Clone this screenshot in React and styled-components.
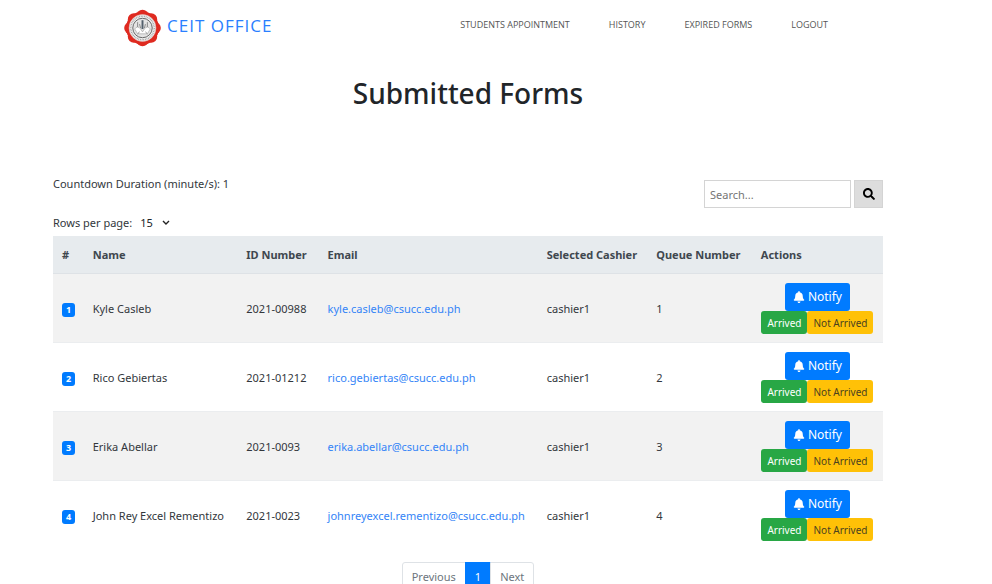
import React from "react";
import styled, { createGlobalStyle, css } from "styled-components";
import { FaBell, FaSearch } from "react-icons/fa";

const GlobalStyle = createGlobalStyle`
  *, *::before, *::after { box-sizing: border-box; }
  body {
    margin: 0;
    background: #fff;
    color: #32373c;
    font-family: "Noto Sans", "Open Sans", sans-serif;
    font-size: 11px;
    line-height: 18px;
  }
  button, input, select { font: inherit; }
`;

const Page = styled.div`
  padding-right: 56px;
`;

const Header = styled.header`
  display: flex;
  align-items: flex-start;
  justify-content: space-between;
  padding: 9px 108px 0 124px;
`;

const Brand = styled.a`
  display: flex;
  align-items: flex-start;
  gap: 6px;
  color: #2a7fff;
  font-family: "Open Sans", sans-serif;
  font-size: 17px;
  line-height: 34px;
  letter-spacing: 1px;
  text-decoration: none;
`;

const Seal = styled.svg`
  display: block;
  width: 37px;
  height: 38px;
`;

const Nav = styled.nav`
  display: flex;
  gap: 39px;
  padding-top: 8px;
`;

const NavLink = styled.a`
  color: #555;
  font-family: "Open Sans", sans-serif;
  font-size: 9px;
  line-height: 16px;
  text-decoration: none;
  text-transform: uppercase;
`;

const Main = styled.main`
  padding: 0 53px;
`;

const Title = styled.h1`
  margin: 28px 0 0;
  color: #212529;
  font-size: 28px;
  font-weight: 500;
  line-height: 36px;
  text-align: center;
`;

const Controls = styled.div`
  display: flex;
  justify-content: space-between;
  align-items: flex-start;
  margin-top: 64px;
`;

const Settings = styled.div`
  display: flex;
  flex-direction: column;
  gap: 21px;
`;

const Setting = styled.p`
  margin: 0;
`;

const RowsLabel = styled.label`
  display: flex;
  align-items: center;
  gap: 8px;
`;

const SelectWrap = styled.span`
  display: grid;
  align-items: center;
`;

const RowsSelect = styled.select`
  grid-area: 1 / 1;
  width: 30px;
  height: 18px;
  padding: 0;
  border: 0;
  background: transparent;
  color: #212529;
  appearance: none;
`;

const Caret = styled.svg`
  grid-area: 1 / 1;
  justify-self: end;
  width: 8px;
  height: 6px;
  pointer-events: none;
`;

const Search = styled.form`
  display: flex;
  gap: 3px;
  padding-top: 5px;
`;

const SearchInput = styled.input`
  width: 147px;
  height: 28px;
  padding: 0 5px;
  border: 1px solid #d4d4d4;
  color: #333;
  &::placeholder { color: #757575; }
`;

const SearchButton = styled.button`
  display: flex;
  align-items: center;
  justify-content: center;
  width: 29px;
  height: 28px;
  padding: 0;
  border: 1px solid #d4d4d4;
  background: #ddd;
  color: #000;
`;

const Table = styled.table`
  width: 100%;
  margin-top: 4px;
  border-spacing: 0;
  table-layout: fixed;
`;

const Col = styled.col`
  width: ${(p) => p.$share}%;
`;

const HeadCell = styled.th`
  height: 38px;
  padding: 0 9px;
  border-bottom: 1px solid #dee2e6;
  background: #e7ebee;
  color: #40474e;
  font-weight: 700;
  text-align: left;
  white-space: nowrap;
`;

const Row = styled.tr`
  &:nth-child(odd) { background: #f2f2f2; }
`;

const Cell = styled.td`
  padding: 9px 9px 8px;
  border-bottom: 1px solid ${(p) => (p.$last ? "transparent" : "#ebedef")};
  white-space: nowrap;
`;

const Badge = styled.span`
  display: block;
  width: 13px;
  height: 14px;
  margin-top: 2px;
  border-radius: 3px;
  background: #007bff;
  color: #fff;
  font-size: 9px;
  font-weight: 700;
  line-height: 14px;
  text-align: center;
`;

const Mail = styled.a`
  color: #3484f7;
  text-decoration: none;
`;

const Actions = styled.div`
  display: flex;
  flex-direction: column;
  align-items: center;
`;

const ActionPair = styled.div`
  display: flex;
`;

const tones = {
  primary: css`background: #007bff; color: #fff;`,
  success: css`background: #28a745; color: #fff;`,
  warning: css`background: #ffc107; color: #4a4120;`,
};

const Button = styled.button`
  display: flex;
  align-items: center;
  justify-content: center;
  gap: 3px;
  height: ${(p) => (p.$small ? 23 : 28)}px;
  padding: 0 ${(p) => (p.$small ? 6 : 8)}px;
  border: 0;
  border-radius: 3px;
  font-size: ${(p) => (p.$small ? 10 : 12)}px;
  white-space: nowrap;
  ${(p) => tones[p.$tone]}
`;

const Pagination = styled.nav`
  display: flex;
  justify-content: center;
  margin-top: 12px;
`;

const PageButton = styled.button`
  height: 29px;
  margin: 0 0 0 -1px;
  padding: 0 9px;
  border: 1px solid ${(p) => (p.$active ? "#007bff" : "#dee2e6")};
  background: ${(p) => (p.$active ? "#007bff" : "#fff")};
  color: ${(p) => (p.$active ? "#fff" : "#6c757d")};
  &:first-child { margin-left: 0; border-radius: 3px 0 0 3px; }
  &:last-child { border-radius: 0 3px 3px 0; }
`;

const links = ["Students Appointment", "History", "Expired Forms", "Logout"];
const columns = [
  ["#", 3.7],
  ["Name", 18.5],
  ["ID Number", 9.8],
  ["Email", 26.4],
  ["Selected Cashier", 13.2],
  ["Queue Number", 12.6],
  ["Actions", 15.8],
];
const forms = [
  { name: "Kyle Casleb", id: "2021-00988", email: "kyle.casleb@csucc.edu.ph" },
  { name: "Rico Gebiertas", id: "2021-01212", email: "rico.gebiertas@csucc.edu.ph" },
  { name: "Erika Abellar", id: "2021-0093", email: "erika.abellar@csucc.edu.ph" },
  { name: "John Rey Excel Rementizo", id: "2021-0023", email: "johnreyexcel.rementizo@csucc.edu.ph" },
];
const petals = [0, 45, 90, 135, 180, 225, 270, 315];

function SealMark() {
  return (
    <Seal viewBox="-19 -19 38 38" aria-hidden="true">
      <g fill="#df2a20">
        <circle r="17" />
        {petals.map((a) => (
          <circle key={a} cy="-12.5" r="6.3" transform={`rotate(${a})`} />
        ))}
      </g>
      <circle r="13.8" fill="#f3f3f3" stroke="#d8b8b4" strokeWidth="0.6" />
      <circle r="12" fill="none" stroke="#a2a2a2" strokeWidth="1.5" strokeDasharray="0.9 0.8" />
      <circle r="10" fill="#e4e4e4" stroke="#555" strokeWidth="0.9" />
      <path d="M-8 1Q-5-3-2 1L0 4 2 1Q5-3 8 1L5 6H-5Z" fill="#fff" stroke="#999" strokeWidth="0.6" />
      <path d="M-5-6V-1M5-6V-1M-3 4L-5 6M3 4L5 6M-3-4L-2 0M3-4L2 0" fill="none" stroke="#888" strokeWidth="1" />
      <path d="M-1-8H1V1H-1Z" fill="#53606c" />
    </Seal>
  );
}

export default function App() {
  return (
    <Page>
      <GlobalStyle />
      <Header>
        <Brand href="#home">
          <SealMark />
          CEIT OFFICE
        </Brand>
        <Nav aria-label="Main">
          {links.map((label) => (
            <NavLink key={label} href="#">{label}</NavLink>
          ))}
        </Nav>
      </Header>
      <Main>
        <Title>Submitted Forms</Title>
        <Controls>
          <Settings>
            <Setting>Countdown Duration (minute/s): 1</Setting>
            <RowsLabel>
              Rows per page:
              <SelectWrap>
                <RowsSelect defaultValue="15">
                  <option>15</option>
                  <option>25</option>
                  <option>50</option>
                </RowsSelect>
                <Caret viewBox="0 0 8 6" aria-hidden="true">
                  <path d="M1 1l3 3 3-3" fill="none" stroke="#222" strokeWidth="1.4" />
                </Caret>
              </SelectWrap>
            </RowsLabel>
          </Settings>
          <Search>
            <SearchInput type="text" placeholder="Search..." aria-label="Search" />
            <SearchButton type="button" aria-label="Submit search">
              <FaSearch size={12} />
            </SearchButton>
          </Search>
        </Controls>
        <Table>
          <colgroup>
            {columns.map(([label, share]) => <Col key={label} $share={share} />)}
          </colgroup>
          <thead>
            <tr>
              {columns.map(([label]) => <HeadCell key={label} scope="col">{label}</HeadCell>)}
            </tr>
          </thead>
          <tbody>
            {forms.map((form, i) => {
              const last = i === forms.length - 1;
              return (
                <Row key={form.id}>
                  <Cell $last={last}><Badge>{i + 1}</Badge></Cell>
                  <Cell $last={last}>{form.name}</Cell>
                  <Cell $last={last}>{form.id}</Cell>
                  <Cell $last={last}><Mail href={`mailto:${form.email}`}>{form.email}</Mail></Cell>
                  <Cell $last={last}>cashier1</Cell>
                  <Cell $last={last}>{i + 1}</Cell>
                  <Cell $last={last}>
                    <Actions>
                      <Button type="button" $tone="primary"><FaBell size={12} />Notify</Button>
                      <ActionPair>
                        <Button type="button" $tone="success" $small>Arrived</Button>
                        <Button type="button" $tone="warning" $small>Not Arrived</Button>
                      </ActionPair>
                    </Actions>
                  </Cell>
                </Row>
              );
            })}
          </tbody>
        </Table>
        <Pagination aria-label="Pages">
          <PageButton type="button">Previous</PageButton>
          <PageButton type="button" $active aria-current="page">1</PageButton>
          <PageButton type="button">Next</PageButton>
        </Pagination>
      </Main>
    </Page>
  );
}
